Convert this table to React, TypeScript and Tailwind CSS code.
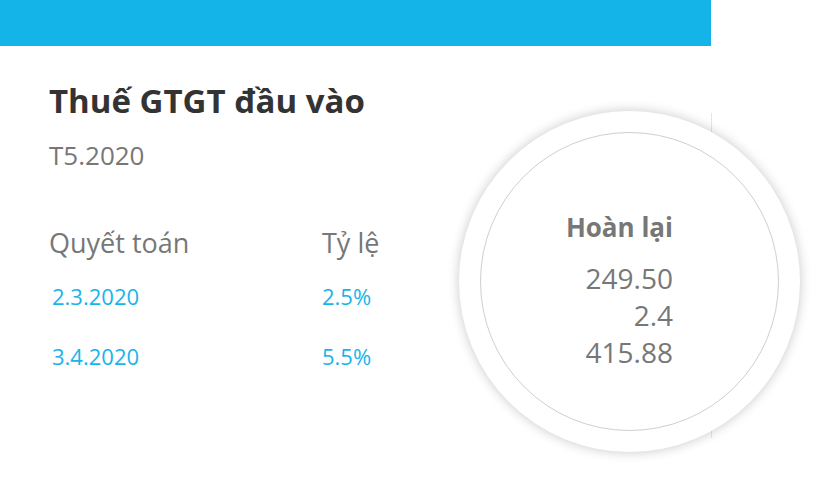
import React from "react";

export default function App() {
  const font = { fontFamily: "'Open Sans', 'Noto Sans', sans-serif" };
  return (
    <div className="relative w-[816px] h-[500px] bg-white overflow-hidden" style={font}>
      <div className="h-[46px] w-[711px] bg-[#14b4e8]" />
      <div className="pl-[49px] pt-[35px]">
        <h1 className="text-[33px] leading-[40px] font-bold text-[#333333]">Thuế GTGT đầu vào</h1>
        <div className="mt-[18px] text-[26px] leading-[32px] text-[#777777]">T5.2020</div>
        <div className="mt-[56px] grid grid-cols-[273px_auto] text-[#777777]">
          <div className="text-[27px] leading-[32px]">Quyết toán</div>
          <div className="text-[27px] leading-[32px]">Tỷ lệ</div>
        </div>
        <div className="mt-[23px] grid grid-cols-[273px_auto] gap-y-[32px] text-[22px] leading-[28px] text-[#1ab4ea]">
          <div className="pl-[3px]">2.3.2020</div>
          <div>2.5%</div>
          <div className="pl-[3px]">3.4.2020</div>
          <div>5.5%</div>
        </div>
      </div>
      <div className="absolute left-[711px] top-[113px] h-[325px] w-px bg-[#e6e6e6]" />
      <div className="absolute left-[459px] top-[111px] w-[341px] h-[341px] rounded-full bg-white shadow-[0_0_12px_rgba(0,0,0,0.22)] flex items-center justify-center">
        <div className="w-[299px] h-[299px] rounded-full border border-[#cfcfcf] flex flex-col items-end pt-[78px] pr-[105px] text-[#777777]">
          <div className="text-[26px] leading-[32px] font-bold">Hoàn lại</div>
          <div className="mt-[17px] text-[28px] leading-[37px] text-right">
            <div>249.50</div>
            <div>2.4</div>
            <div>415.88</div>
          </div>
        </div>
      </div>
    </div>
  );
}
